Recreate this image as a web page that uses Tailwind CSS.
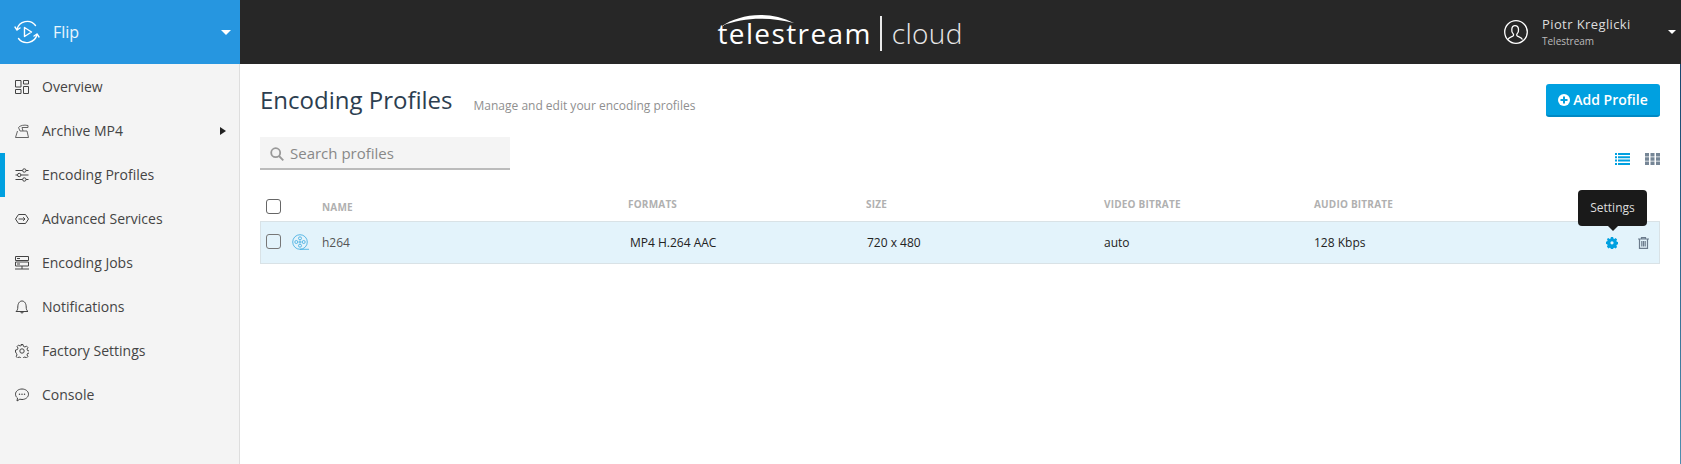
<!DOCTYPE html>
<html lang="en">
<head>
  <meta charset="UTF-8" />
  <title>Encoding Profiles - Telestream Cloud</title>
  <script src="https://cdn.jsdelivr.net/npm/@tailwindcss/browser@4"></script>
</head>
<body class="h-[464px] w-[1681px] overflow-hidden bg-white font-['Open_Sans',sans-serif] text-[#333]">
  <!-- top bar -->
  <header class="flex h-16 bg-[#272727] text-white">
    <div class="flex w-60 items-center bg-[#2696e0] pl-[14px] pr-[9px]">
      <svg class="h-[26px] w-[26px]" viewBox="0 0 26 26" fill="none" stroke="white" stroke-width="1.4" stroke-linecap="round" stroke-linejoin="round">
        <path d="M3 10.500A10.500 10.500 0 0 1 21.500 6.500" />
        <path d="M23 15.500A10.500 10.500 0 0 1 4.500 19.500" />
        <path d="M1 8l2 3 3-2M25 18l-2-3-3 2" />
        <path d="M10.500 8.500v9l7-4.500z" />
      </svg>
      <span class="ml-[13px] text-base leading-none text-white/90">Flip</span>
      <span class="ml-auto h-0 w-0 border-x-[5px] border-t-[5px] border-x-transparent border-t-white"></span>
    </div>
    <div class="flex flex-1 justify-center pr-[40px]">
      <div class="relative flex items-center">
        <svg class="absolute left-[5px] top-[12px] h-[14px] w-[73px]" viewBox="0 0 74 14" fill="none">
          <path d="M0 14C16 3 46 -3 73 11C48 5 22 5 0 14Z" fill="white" />
        </svg>
        <span class="pt-[1px] text-[28px] leading-none tracking-[1.400px] text-white">telestream</span>
        <span class="ml-[8px] mr-[10px] mt-[2px] h-[35px] w-[2px] bg-white/90"></span>
        <span class="pt-[1px] text-[28px] font-light leading-none tracking-[0.300px] text-white/90">cloud</span>
      </div>
    </div>
    <div class="flex w-[201px] items-center pl-[24px] pr-[5px]">
      <svg class="h-6 w-6" viewBox="0 0 24 24" fill="none" stroke="white" stroke-width="1.300">
        <circle cx="12" cy="12" r="11.300" />
        <path d="M3.800 19.500c1-2.200 3-2.500 5-3.300 1-.4 1-1.800.3-2.600-1-1.100-1.500-2.600-1.300-4.300.2-2.200 1.600-3.600 3.200-3.600s3.300 1.400 3.500 3.600c.2 1.700-.3 3.200-1.300 4.300-.7.8-.7 2.200.3 2.600 2 .8 4 1.100 5 3.300" />
      </svg>
      <div class="ml-[14px] -mt-[2px]">
        <div class="text-[13px] leading-[16px] tracking-[0.4px] text-[#ddd]">Piotr Kreglicki</div>
        <div class="mt-[3px] text-[10px] leading-[12px] text-[#bbb]">Telestream</div>
      </div>
      <span class="ml-auto h-0 w-0 border-x-[4px] border-t-[4px] border-x-transparent border-t-white"></span>
    </div>
  </header>

  <div class="flex h-[400px]">
    <!-- sidebar -->
    <nav class="w-60 border-r border-[#dedede] bg-[#f4f4f4] pt-[1px] text-sm text-[#444]">
      <a class="flex h-11 items-center pl-[15px]">
        <svg class="mr-[13px] h-[14px] w-[14px]" viewBox="0 0 14 14" fill="none" stroke="#444" stroke-width="1"><path d="M.500.500h5.500v6.500H.500zM8.500.500h5v3.500h-5zM.500 9.500h5.500v4H.500zM8.500 6.500h5v7h-5z" /></svg>
        Overview
      </a>
      <a class="flex h-11 items-center pl-[15px] pr-[13px]">
        <svg class="mr-[13px] h-[14px] w-[14px]" viewBox="0 0 14 14" fill="none" stroke="#555" stroke-width=".9"><path d="M.500 13.500h13L12 7H5L3.500 3.500C5 1.500 9 .5 13 1.500L13 3.500H7L8 7M.500 13.500L2.500 7" /></svg>
        Archive MP4
        <span class="ml-auto h-0 w-0 border-y-[4px] border-l-[6px] border-y-transparent border-l-[#222]"></span>
      </a>
      <a class="relative flex h-11 items-center pl-[15px]">
        <span class="absolute left-0 top-0 h-11 w-[5px] bg-[#00a0e0]"></span>
        <svg class="mr-[13px] h-[14px] w-[14px]" viewBox="0 0 14 14" fill="none" stroke="#444" stroke-width="1"><path d="M.500 2.500h7M11 2.500h2.500M.500 7h2M6 7h7.500M.500 11.500h7M11 11.500h2.500" /><circle cx="9.300" cy="2.500" r="1.700" /><circle cx="4.200" cy="7" r="1.700" /><circle cx="9.300" cy="11.500" r="1.700" /></svg>
        Encoding Profiles
      </a>
      <a class="flex h-11 items-center pl-[15px]">
        <svg class="mr-[13px] h-[14px] w-[14px]" viewBox="0 0 14 14" fill="none" stroke="#444" stroke-width="1"><path d="M3.500 2.500h7l3 4.500-3 4.500h-7l-3-4.500zM3.500 7h6.500M8.200 5.200L10 7 8.200 8.800" /></svg>
        Advanced Services
      </a>
      <a class="flex h-11 items-center pl-[15px]">
        <svg class="mr-[13px] h-[14px] w-[14px]" viewBox="0 0 14 14" fill="none" stroke="#444" stroke-width="1"><path d="M.500.500h13v4h-13zM.500 6h13v4h-13zM0 13h14M7 10v3M2 2.500h3M2 8h3" /></svg>
        Encoding Jobs
      </a>
      <a class="flex h-11 items-center pl-[15px]">
        <svg class="mr-[13px] h-[14px] w-[14px]" viewBox="0 0 14 14" fill="none" stroke="#444" stroke-width="1"><path d="M1 11.500c1.200-1 1.800-2 1.800-4.500C2.800 3.500 4.500 1 7 1s4.200 2.500 4.200 6c0 2.500.6 3.500 1.800 4.500zM5.500 11.500c0 2 3 2 3 0" /></svg>
        Notifications
      </a>
      <a class="flex h-11 items-center pl-[15px]">
        <svg class="mr-[13px] h-[14px] w-[14px]" viewBox="0 0 14 14" fill="none" stroke="#444" stroke-width="1"><circle cx="7" cy="7" r="2.200" /><path d="M6 .500h2l.4 1.800 1.500.7 1.600-.9 1.400 1.400-.9 1.600.6 1.500 1.900.4v2l-1.900.4-.6 1.500.9 1.600-1.400 1.400-1.600-.9-1.500.6-.4 1.900H6l-.4-1.900-1.500-.6-1.600.9-1.400-1.400.9-1.600-.6-1.500L.500 8V6l1.900-.4.6-1.500-.9-1.600 1.400-1.400 1.600.9 1.500-.7z" /></svg>
        Factory Settings
      </a>
      <a class="flex h-11 items-center pl-[15px]">
        <svg class="mr-[13px] h-[14px] w-[14px]" viewBox="0 0 14 14" fill="none" stroke="#444" stroke-width="1"><path d="M7 1c3.500 0 6.500 2.200 6.500 5.200S10.500 11.500 7 11.500c-.8 0-1.500-.1-2.200-.3L2 13l.5-3C1.200 9 .5 7.700.5 6.200.5 3.200 3.500 1 7 1z" /><path d="M4.500 6.300h.01M7 6.300h.01M9.500 6.300h.01" stroke-width="1.500" stroke-linecap="round" /></svg>
        Console
      </a>
    </nav>

    <!-- content -->
    <main class="relative flex-1 pl-5 pr-5">
      <div class="flex h-[73px] items-center">
        <h1 class="mb-[2px] text-2xl leading-none text-[#2c3e50]">Encoding Profiles</h1>
        <p class="ml-[21px] mt-[10px] text-xs text-[#8f8f8f]">Manage and edit your encoding profiles</p>
        <button class="ml-auto flex h-[33px] w-[114px] items-center justify-center rounded-[3px] border-b-[2px] border-[#0089c4] bg-[#00a0e0] text-sm font-semibold text-white">
          <svg class="mr-[3px] h-3 w-3" viewBox="0 0 12 12"><circle cx="6" cy="6" r="6" fill="white" /><path d="M6 2.500v7M2.500 6h7" stroke="#00a0e0" stroke-width="2" /></svg>
          Add Profile
        </button>
      </div>

      <div class="flex items-start justify-between">
        <div class="flex h-[33px] w-[250px] items-center border-b-2 border-[#bbb] bg-[#f4f4f4] pl-[10px] pt-[2px] text-[15px] text-[#888]">
          <svg class="mr-[6px] h-[14px] w-[14px]" viewBox="0 0 14 14" fill="none" stroke="#999" stroke-width="1.800"><circle cx="5.700" cy="5.700" r="4.500" /><path d="M9 9l4.300 4.300" /></svg>
          Search profiles
        </div>
        <div class="mt-[16px] flex gap-[15px]">
          <svg class="h-[12px] w-[15px]" viewBox="0 0 15 12" fill="#00a0e0"><path d="M0 0h2v2H0zM3 0h12v2H3zM0 3.300h2v2H0zM3 3.300h12v2H3zM0 6.600h2v2H0zM3 6.600h12v2H3zM0 10h2v2H0zM3 10h12v2H3z" /></svg>
          <svg class="h-[12px] w-[15px]" viewBox="0 0 15 12" fill="#768696"><path d="M0 0h4v3.500H0zM5.500 0h4v3.500h-4zM11 0h4v3.500h-4zM0 4.300h4v3.500H0zM5.500 4.300h4v3.500h-4zM11 4.300h4v3.500h-4zM0 8.600h4V12H0zM5.500 8.600h4V12h-4zM11 8.600h4V12h-4z" /></svg>
        </div>
      </div>

      <!-- table -->
      <div class="mt-[18px] grid h-[33px] grid-cols-[62px_306px_238px_238px_210px_1fr] text-[10px] font-bold tracking-[0.2px] text-[#b0b0b0]">
        <div class="pl-[6px]"><span class="mt-[11px] block h-[15px] w-[15px] rounded-[3px] border border-[#666] bg-white"></span></div>
        <div class="pt-[12px]">NAME</div>
        <div class="pt-[9px]">FORMATS</div>
        <div class="pt-[9px]">SIZE</div>
        <div class="pt-[9px]">VIDEO BITRATE</div>
        <div class="pt-[9px]">AUDIO BITRATE</div>
      </div>
      <div class="grid h-[43px] grid-cols-[61px_306px_238px_238px_210px_1fr] items-center border border-[#d9e2e6] bg-[#e3f3fb] text-xs text-[#222]">
        <div class="flex items-center pl-[5px]">
          <span class="-mt-[2px] block h-[15px] w-[15px] rounded-[3px] border border-[#777]"></span>
          <svg class="ml-[11px] h-[18px] w-[18px]" viewBox="0 0 18 18" fill="none" stroke="#3aa9e0" stroke-width=".8"><circle cx="8" cy="8" r="7.300" /><circle cx="8" cy="8" r="1" /><circle cx="8" cy="4.300" r="1.500" /><circle cx="8" cy="11.700" r="1.500" /><circle cx="4.300" cy="8" r="1.500" /><circle cx="11.700" cy="8" r="1.500" /><path d="M8 15.300h9" /></svg>
        </div>
        <div class="text-[#555]">h264</div>
        <div class="pl-[2px]">MP4 H.264 AAC</div>
        <div class="pl-[1px]">720 x 480</div>
        <div>auto</div>
        <div class="flex items-center">
          128 Kbps
          <span class="ml-auto flex items-center gap-[20px] pr-[10px]">
            <svg class="h-3 w-3" viewBox="0 0 12 12" fill="#00a0e0"><path fill-rule="evenodd" d="M4.900 0h2.200l.3 1.500 1 .4 1.200-.9 1.500 1.500-.7 1.200.4 1 1.200.4v2.200l-1.200.4-.4 1 .7 1.200-1.500 1.500-1.200-.7-1 .4-.3 1.300H4.900l-.3-1.300-1-.4-1.200.7L.9 9.500l.7-1.200-.4-1L0 6.900V4.700l1.200-.4.4-1-.7-1.200L2.400 1l1.200.9 1-.4zM6 4.200a1.600 1.600 0 1 0 0 3.200 1.600 1.600 0 0 0 0-3.200z" /></svg>
            <svg class="h-3 w-[11px]" viewBox="0 0 11 12" fill="none" stroke="#6b7b8c" stroke-width="1.200"><path d="M0 2h11M3.500 2V.600h4V2M1.500 2v9.400h8V2M3.800 4v5.500M5.500 4v5.500M7.200 4v5.500" /></svg>
          </span>
        </div>
      </div>

      <!-- tooltip -->
      <div class="absolute right-[33px] top-[126px] flex h-9 w-[69px] items-center justify-center rounded-[4px] bg-[#1a1a1a] text-xs text-[#ddd]">
        Settings
        <span class="absolute -bottom-[5px] left-1/2 h-0 w-0 -translate-x-1/2 border-x-[5px] border-t-[5px] border-x-transparent border-t-[#1a1a1a]"></span>
      </div>
    </main>
    <div class="w-px bg-linear-to-b from-[#17466e] to-[#4f8fb0]"></div>
  </div>
</body>
</html>
